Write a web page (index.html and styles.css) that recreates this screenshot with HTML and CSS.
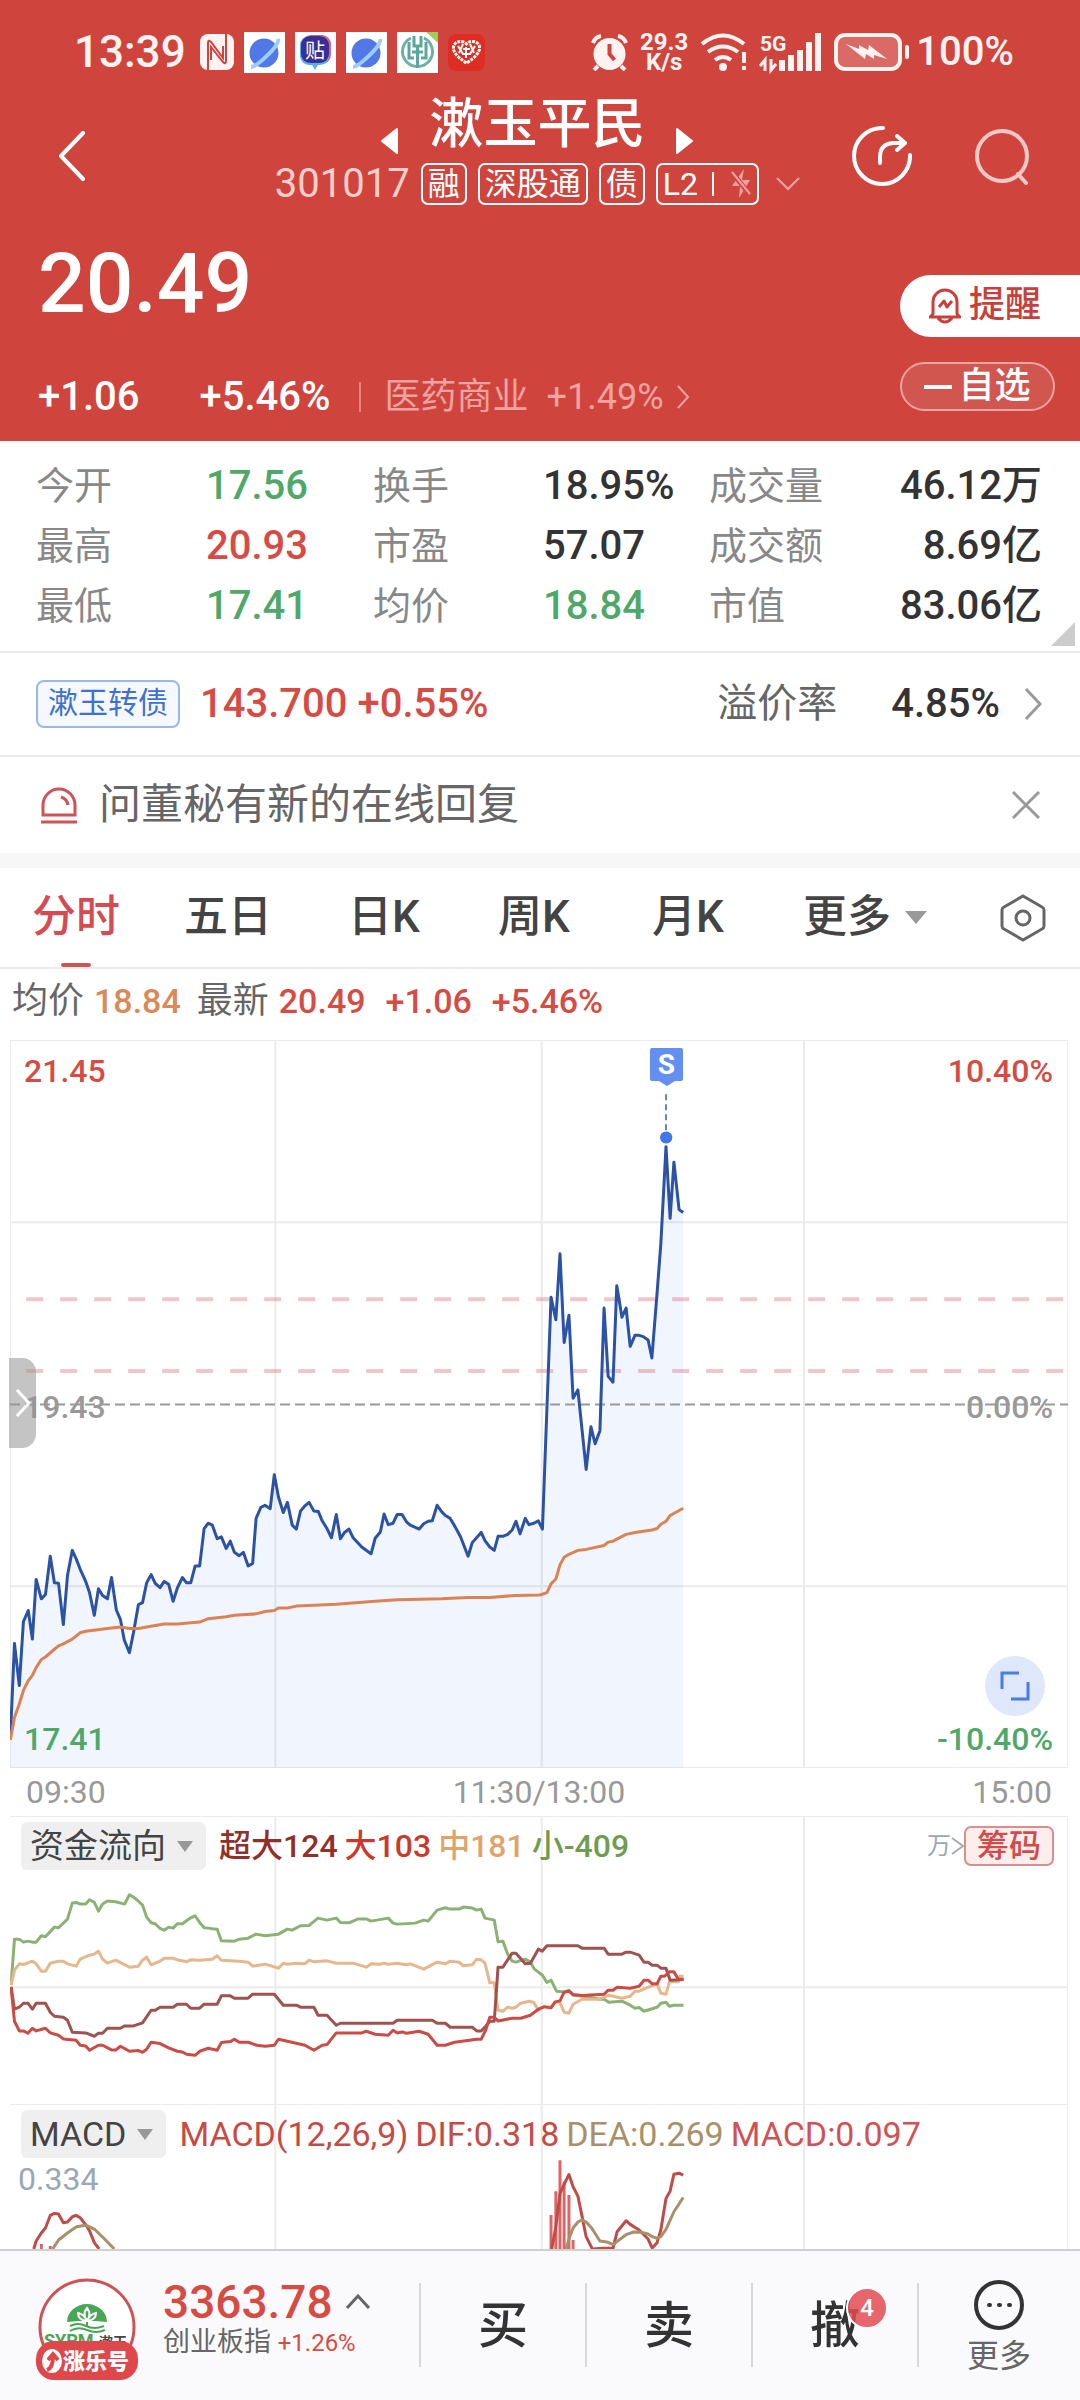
FILE: index.html
```
<!DOCTYPE html>
<html lang="zh-CN">
<head>
  <meta charset="UTF-8">
  <meta name="viewport" content="width=device-width, initial-scale=1.0">
  <title>漱玉平民 301017</title>
  <link rel="stylesheet" href="styles.css">
</head>
<body>
  <div class="page">
    <header class="quote">
      <div class="status">
        <span class="time">13:39</span>
        <svg class="nfc" viewBox="0 0 34 36">
          <rect width="34" height="36" rx="8" fill="#fff3f2"/>
          <path d="M8 36V9q0-4 3-1l12 16V12M26 0v27q0 4-3 1L11 13v13" fill="none" stroke="#cf453e" stroke-width="2"/>
        </svg>
        <svg class="app" viewBox="0 0 41 41">
          <rect width="41" height="41" fill="#fff"/>
          <circle cx="20" cy="21" r="14.500" fill="#5277e6"/>
          <path d="M7 35C12 35 36 14 34 7" fill="none" stroke="#9ccdfb" stroke-width="4"/>
        </svg>
        <svg class="app" viewBox="0 0 41 41">
          <rect width="41" height="41" fill="#fff"/>
          <rect x="7" y="3" width="29" height="29" rx="9" fill="#e0607f"/>
          <path d="M16 31h8l-4 7z" fill="#56aef5"/>
          <rect x="5" y="4" width="29" height="29" rx="9" fill="#56aef5"/>
          <rect x="6" y="4" width="28" height="27" rx="9" fill="#3a2f93"/>
          <text x="20" y="26" class="app-text">贴</text>
        </svg>
        <svg class="app" viewBox="0 0 41 41">
          <rect width="41" height="41" fill="#fff"/>
          <circle cx="20" cy="21" r="14.500" fill="#5277e6"/>
          <path d="M7 35C12 35 36 14 34 7" fill="none" stroke="#9ccdfb" stroke-width="4"/>
        </svg>
        <svg class="app" viewBox="0 0 41 41">
          <rect width="41" height="41" fill="#fff"/>
          <path d="M29 0h12v11z" fill="#9bcf5a"/>
          <path d="M14 6A15 15 0 1 0 27 6" fill="none" stroke="#6db0a6" stroke-width="3"/>
          <path d="M17 4v10h7V4M12 10v16h5M29 10v16h-5M15 20h11M20.500 15v21" fill="none" stroke="#5ea59c" stroke-width="3"/>
        </svg>
        <svg class="app heart" viewBox="0 0 37 37">
          <rect width="37" height="37" rx="8" fill="#df2d23"/>
          <path d="M18.500 29C9 23 5 18 5.500 13s8-8 13-3c5-5 12.500-2 13 3s-3.500 10-13 16z" fill="none" stroke="#fff" stroke-width="3" stroke-dasharray="3 1"/>
          <path d="M10 12l5 8M15 10l-4 9M22 10l4 9M27 12l-5 8M15 15h7M18 13v11M14 20h9" stroke="#fff" stroke-width="2"/>
        </svg>
        <div class="status-right">
          <svg class="alarm" viewBox="0 0 37 37">
            <circle cx="18.500" cy="20" r="16" fill="#fff3f2"/>
            <path d="M2 9q2-6 8-7M35 9q-2-6-8-7M7 32l-4 4M30 32l4 4" stroke="#fff3f2" stroke-width="4" fill="none"/>
            <path d="M18.500 10v10l5 6" stroke="#cf453e" stroke-width="4" fill="none"/>
          </svg>
          <div class="speed"><span>29.3</span><span>K/s</span></div>
          <svg class="wifi" viewBox="0 0 48 38">
            <path d="M2 11Q23-6 44 11M8 19q15-11 30 0M15 27q8-6 16 0" fill="none" stroke="#fff3f2" stroke-width="4"/>
            <circle cx="23" cy="34" r="4" fill="#fff3f2"/>
            <path d="M44 19v11M44 33v4" stroke="#fff3f2" stroke-width="4"/>
          </svg>
          <svg class="signal" viewBox="0 0 62 38">
            <text x="0" y="18" class="net">5G</text>
            <path d="M22 38V27M31 38V22M40 38V17M49 38V9M58 38V0" stroke="#fff3f2" stroke-width="6"/>
            <path d="M0 33l5-6v11M11 26v11l5-6" stroke="#fff3f2" stroke-width="3" fill="none"/>
          </svg>
          <svg class="battery" viewBox="0 0 76 38">
            <rect x="2" y="2" width="64" height="34" rx="9" fill="#da6a66" stroke="#fff3f2" stroke-width="4"/>
            <path d="M12 11l13 5v-4l9 5 1-5 18 14-13-4v4l-8-5-1 5z" fill="#fff3f2"/>
            <path d="M73 14v10" stroke="#fff3f2" stroke-width="4" stroke-linecap="round"/>
          </svg>
          <span class="percent">100%</span>
        </div>
      </div>

      <div class="titlebar">
        <button class="icon-btn back" aria-label="返回">
          <svg width="28" height="50" viewBox="0 0 28 50"><path d="M25 2L3 25l22 23" class="line"/></svg>
        </button>
        <div class="names">
          <div class="name-row">
            <button class="icon-btn" aria-label="上一只"><svg width="18" height="28" viewBox="0 0 18 28"><path d="M17 2v24L2 14z" fill="#fff" stroke="#fff" stroke-width="2" stroke-linejoin="round"/></svg></button>
            <h1>漱玉平民</h1>
            <button class="icon-btn" aria-label="下一只"><svg width="18" height="28" viewBox="0 0 18 28"><path d="M1 2v24l15-12z" fill="#fff" stroke="#fff" stroke-width="2" stroke-linejoin="round"/></svg></button>
          </div>
          <div class="tags">
            <span class="code">301017</span>
            <span class="tag">融</span>
            <span class="tag">深股通</span>
            <span class="tag">债</span>
            <span class="tag level">L2<i></i>
              <svg width="22" height="32" viewBox="0 0 22 32"><path d="M14 1l-2 11h8L9 30l1-12H2z" fill="#f0a09e"/><path d="M1 3l19 24" stroke="#cf453e" stroke-width="5"/><path d="M2 4l18 22" stroke="#f0a09e" stroke-width="2"/></svg>
            </span>
            <svg class="down" width="24" height="14" viewBox="0 0 24 14"><path d="M1 1l11 11L23 1"/></svg>
          </div>
        </div>
        <div class="actions">
          <button class="icon-btn" aria-label="分享">
            <svg width="60" height="60" viewBox="0 0 60 60"><path d="M31 2a28 28 0 1 0 27 27M28 37v-6q0-13 13-14h12M45 10l8 7-8 7" class="line"/></svg>
          </button>
          <button class="icon-btn search" aria-label="搜索">
            <svg width="56" height="60" viewBox="0 0 56 60"><circle cx="28" cy="30" r="25"/><path d="M44 48l8 9"/></svg>
          </button>
        </div>
      </div>

      <div class="price-area">
        <div class="price-left">
          <div class="price">20.49</div>
          <div class="change">
            <span>+1.06</span>
            <span>+5.46%</span>
            <a href="#" class="industry"><b>医药商业</b>+1.49%
              <svg width="14" height="26" viewBox="0 0 14 26"><path d="M2 2l10 11L2 24"/></svg>
            </a>
          </div>
        </div>
        <div class="price-right">
          <button class="remind">
            <svg width="32" height="36" viewBox="0 0 32 36"><path d="M4 26V14a12 12 0 0 1 24 0v12l3 3H1zM9 30q7 8 14 0M10 19l5-6 3 6 5-6"/></svg>提醒
          </button>
          <button class="fav"><i></i>自选</button>
        </div>
      </div>
    </header>

    <dl class="stats">
      <dt>今开</dt><dd class="green">17.56</dd>
      <dt>换手</dt><dd>18.95%</dd>
      <dt>成交量</dt><dd>46.12万</dd>
      <dt>最高</dt><dd class="red">20.93</dd>
      <dt>市盈</dt><dd>57.07</dd>
      <dt>成交额</dt><dd>8.69亿</dd>
      <dt>最低</dt><dd class="green">17.41</dd>
      <dt>均价</dt><dd class="green">18.84</dd>
      <dt>市值</dt><dd>83.06亿</dd>
    </dl>

    <a href="#" class="bond">
      <span class="bond-tag">漱玉转债</span>
      <span class="red">143.700 +0.55%</span>
      <span class="rate">溢价率</span>
      <span class="rate-value">4.85%</span>
      <svg width="18" height="32" viewBox="0 0 18 32"><path d="M2 1l14 15L2 31"/></svg>
    </a>

    <div class="notice">
      <svg width="38" height="38" viewBox="0 0 38 38"><path d="M3 29V19a16 16 0 0 1 32 0v10zM1 36h36M21 11q6 2 7 8"/></svg>
      <span>问董秘有新的在线回复</span>
      <button class="icon-btn close" aria-label="关闭"><svg width="28" height="28" viewBox="0 0 28 28"><path d="M1 1l26 26M27 1L1 27"/></svg></button>
    </div>

    <nav class="tabs">
      <button class="active">分时</button>
      <button>五日</button>
      <button>日K</button>
      <button>周K</button>
      <button>月K</button>
      <button class="more">更多<i class="caret"></i></button>
      <button class="setting" aria-label="设置">
        <svg width="46" height="48" viewBox="0 0 46 48"><path d="M23 2l19 11q2 1 2 3v16q0 2-2 3L23 46 4 35q-2-1-2-3V16q0-2 2-3z"/><circle cx="23" cy="24" r="7"/></svg>
      </button>
    </nav>

    <div class="legend">
      <span>均价</span><b class="orange">18.84</b>
      <span class="last">最新</span><b class="red">20.49</b>
      <b class="red gap">+1.06</b><b class="red gap">+5.46%</b>
    </div>

    <main class="charts">
      <section class="chart">
        <svg class="plot" viewBox="28 20 3074 1502" preserveAspectRatio="none">
          <polygon class="area" points="29,1462 41,1265 55,1352 67,1220 81,1197 93,1256 104,1133 119,1173 131,1164 145,1085 157,1140 169,1141 183,1226 195,1125 209,1073 220,1090 232,1112 248,1137 259,1160 273,1207 285,1152 297,1166 311,1173 323,1129 337,1196 349,1216 360,1258 375,1284 387,1242 401,1185 413,1181 425,1140 438,1123 450,1141 464,1150 476,1137 489,1143 502,1178 514,1151 529,1129 541,1140 553,1140 566,1105 579,1105 592,1028 604,1017 616,1021 630,1049 642,1045 656,1069 668,1054 680,1077 694,1084 706,1077 720,1105 733,1100 743,1007 757,984 769,980 784,987 796,917 808,963 822,995 834,974 848,1021 860,1029 872,992 885,981 897,974 911,992 924,993 935,1012 949,1028 962,1047 976,999 988,1049 1000,1036 1013,1029 1025,1047 1050,1066 1077,1080 1089,1048 1104,1035 1115,998 1127,1020 1141,1017 1153,999 1167,999 1180,1014 1191,1021 1217,1029 1230,1018 1243,1013 1255,1012 1269,980 1282,993 1293,1001 1307,1007 1321,1024 1337,1045 1359,1085 1371,1057 1397,1036 1408,1053 1422,1066 1435,1073 1446,1044 1460,1044 1474,1040 1487,1031 1498,1013 1510,1039 1525,1007 1536,1020 1550,1017 1563,1012 1575,1029 1600,551 1614,597 1626,461 1638,644 1652,588 1664,759 1678,742 1702,906 1716,818 1728,853 1742,826 1754,573 1766,714 1780,726 1791,527 1806,592 1818,573 1830,652 1844,629 1854,629 1868,632 1882,639 1893,676 1908,543 1919,440 1934,240 1946,388 1957,272 1972,370 1984,376 1984,1522 29,1522"/>
          <path class="grid" d="M28 20H3102V1522H28ZM28 396H3102M28 1147H3102M799 20V1522M1573 20V1522M2335 20V1522"/>
          <path class="resist" d="M75 555H3090M75 703H3090"/>
          <path class="zero" d="M28 772H3102"/>
          <polyline class="price-line" points="29,1462 41,1265 55,1352 67,1220 81,1197 93,1256 104,1133 119,1173 131,1164 145,1085 157,1140 169,1141 183,1226 195,1125 209,1073 220,1090 232,1112 248,1137 259,1160 273,1207 285,1152 297,1166 311,1173 323,1129 337,1196 349,1216 360,1258 375,1284 387,1242 401,1185 413,1181 425,1140 438,1123 450,1141 464,1150 476,1137 489,1143 502,1178 514,1151 529,1129 541,1140 553,1140 566,1105 579,1105 592,1028 604,1017 616,1021 630,1049 642,1045 656,1069 668,1054 680,1077 694,1084 706,1077 720,1105 733,1100 743,1007 757,984 769,980 784,987 796,917 808,963 822,995 834,974 848,1021 860,1029 872,992 885,981 897,974 911,992 924,993 935,1012 949,1028 962,1047 976,999 988,1049 1000,1036 1013,1029 1025,1047 1050,1066 1077,1080 1089,1048 1104,1035 1115,998 1127,1020 1141,1017 1153,999 1167,999 1180,1014 1191,1021 1217,1029 1230,1018 1243,1013 1255,1012 1269,980 1282,993 1293,1001 1307,1007 1321,1024 1337,1045 1359,1085 1371,1057 1397,1036 1408,1053 1422,1066 1435,1073 1446,1044 1460,1044 1474,1040 1487,1031 1498,1013 1510,1039 1525,1007 1536,1020 1550,1017 1563,1012 1575,1029 1600,551 1614,597 1626,461 1638,644 1652,588 1664,759 1678,742 1702,906 1716,818 1728,853 1742,826 1754,573 1766,714 1780,726 1791,527 1806,592 1818,573 1830,652 1844,629 1854,629 1868,632 1882,639 1893,676 1908,543 1919,440 1934,240 1946,388 1957,272 1972,370 1984,376"/>
          <polyline class="avg-line" points="29,1464 41,1418 55,1390 67,1362 80,1343 93,1331 104,1315 119,1298 131,1293 157,1277 169,1270 183,1266 209,1256 232,1243 248,1240 311,1234 349,1231 375,1234 401,1234 450,1228 476,1225 514,1225 579,1221 604,1214 656,1210 680,1207 743,1204 769,1199 796,1197 808,1192 834,1192 860,1188 911,1186 976,1184 1089,1178 1153,1175 1282,1173 1359,1170 1422,1170 1497,1166 1568,1165 1588,1160 1600,1142 1614,1132 1626,1103 1638,1087 1652,1081 1678,1073 1702,1071 1754,1063 1766,1056 1780,1054 1818,1040 1844,1036 1893,1031 1908,1028 1919,1019 1934,1013 1946,1001 1984,986"/>
          <path class="sell-stem" d="M1934 132V210"/>
          <path class="sell-dot" d="M1934 221h1"/>
        </svg>
        <span class="sell">S</span>
        <span class="label top left red">21.45</span>
        <span class="label top right red">10.40%</span>
        <span class="label mid left">19.43</span>
        <span class="label mid right">0.00%</span>
        <span class="label bottom left green">17.41</span>
        <span class="label bottom right green">-10.40%</span>
        <button class="drawer" aria-label="展开侧栏"><svg width="16" height="30" viewBox="0 0 16 30"><path d="M2 2l12 13L2 28"/></svg></button>
        <button class="expand" aria-label="全屏"><svg width="30" height="30" viewBox="0 0 30 30"><path d="M2 18V2h17M11 28h17V11"/></svg></button>
      </section>

      <div class="axis"><span>09:30</span><span>11:30/13:00</span><span>15:00</span></div>

      <section class="panel flow">
        <svg class="plot" viewBox="28 168 3074 863" preserveAspectRatio="none">
          <path class="grid" d="M28 168H3102V1031M28 681H3102M799 168V1031M1573 168V1031M2335 168V1031"/>
          <polyline class="f-green" points="31,675 41,537 55,537 67,546 80,543 93,546 104,546 119,527 131,530 157,501 169,503 195,477 209,429 220,427 232,432 248,432 259,419 273,427 285,453 297,432 311,423 335,425 361,432 375,404 387,411 401,423 413,435 425,471 438,488 450,491 464,505 476,510 489,501 502,504 514,491 529,491 553,473 566,467 579,487 592,503 604,504 616,506 630,507 642,542 680,543 694,537 720,534 743,522 769,527 808,522 834,507 848,510 872,497 897,496 923,474 949,480 976,474 988,487 1013,488 1038,477 1065,477 1077,483 1127,474 1141,489 1153,492 1205,489 1230,480 1243,483 1269,450 1293,443 1307,447 1333,447 1345,441 1371,444 1384,450 1397,447 1408,474 1422,477 1435,480 1446,545 1460,543 1474,582 1487,603 1498,606 1525,597 1540,606 1552,627 1575,645 1588,667 1600,660 1616,693 1640,695 1652,690 1664,705 1702,709 1742,717 1754,717 1768,726 1806,723 1830,735 1844,744 1856,742 1870,753 1908,741 1919,729 1934,726 1944,738 1957,735 1985,735"/>
          <polyline class="f-orange" points="31,675 41,630 55,611 67,613 93,603 104,611 119,633 131,633 145,609 169,603 183,603 195,611 220,618 232,597 259,585 273,582 285,573 297,597 311,609 335,600 375,621 401,618 413,600 425,591 438,614 464,603 476,594 502,594 514,599 541,605 553,599 579,600 616,597 630,587 642,600 694,603 720,606 733,618 769,612 808,624 822,609 834,612 860,609 885,611 897,600 911,605 949,602 976,609 1025,609 1063,621 1077,611 1104,612 1115,609 1127,612 1153,609 1180,614 1191,611 1230,627 1269,606 1293,611 1307,603 1333,606 1345,617 1371,614 1384,597 1397,599 1408,609 1422,668 1435,668 1446,750 1460,753 1474,741 1487,744 1498,741 1512,729 1536,723 1550,727 1563,750 1580,738 1600,741 1612,725 1626,727 1638,756 1652,759 1664,732 1690,717 1740,717 1754,711 1768,705 1806,714 1830,708 1844,693 1856,693 1882,681 1908,672 1919,699 1934,702 1944,665 1970,665 1975,648 1985,648"/>
          <polyline class="f-dark" points="31,680 41,747 55,741 67,729 80,729 93,747 104,729 131,729 145,756 157,768 183,771 195,780 209,816 248,818 273,828 285,819 297,819 311,804 349,804 361,797 387,797 413,788 438,750 450,750 464,741 502,741 514,732 541,732 553,744 579,744 592,732 630,732 642,707 668,707 680,714 720,714 733,702 796,702 822,735 860,735 872,741 911,741 923,765 949,765 976,795 988,789 1141,789 1153,780 1255,780 1269,789 1293,789 1307,801 1371,801 1384,812 1397,812 1410,798 1422,783 1435,783 1446,621 1460,621 1487,579 1498,579 1525,611 1540,609 1563,567 1574,573 1588,557 1678,557 1690,564 1754,564 1766,582 1806,582 1818,576 1830,576 1856,585 1870,606 1882,606 1894,615 1908,615 1919,624 1934,624 1946,660 1985,658"/>
          <polyline class="f-red" points="31,680 41,783 55,812 67,812 80,819 93,804 104,812 131,804 145,818 169,825 183,836 220,840 232,855 248,857 259,870 285,855 297,855 323,869 335,869 349,858 375,873 401,871 413,876 425,867 438,846 464,850 489,863 514,873 529,875 541,882 566,885 579,873 604,864 630,870 642,847 668,844 680,837 694,846 720,846 745,855 769,858 796,855 808,837 834,843 885,855 911,870 935,855 949,853 976,818 1050,818 1063,813 1089,822 1127,825 1141,810 1153,818 1167,815 1180,819 1217,813 1243,822 1269,855 1293,855 1320,846 1384,837 1397,837 1410,810 1422,771 1435,771 1446,782 1487,774 1512,774 1540,765 1563,747 1580,740 1600,743 1612,725 1626,722 1638,696 1652,693 1664,703 1690,706 1754,702 1766,690 1780,690 1792,681 1830,684 1856,678 1870,660 1882,660 1894,671 1908,671 1919,648 1930,648 1944,635 1957,635 1970,657 1985,657"/>
        </svg>
        <div class="panel-head">
          <button class="pick">资金流向<i class="caret"></i></button>
          <span class="c-dark">超大124</span>
          <span class="c-red">大103</span>
          <span class="c-orange">中181</span>
          <span class="c-green">小-409</span>
          <span class="unit">万<svg width="13" height="18" viewBox="0 0 13 18"><path d="M1 1l11 8-11 8"/></svg></span>
          <button class="chips">筹码</button>
        </div>
      </section>

      <section class="panel macd">
        <svg class="plot" viewBox="28 1031 3074 436" preserveAspectRatio="none">
          <path class="grid" d="M28 1031H3102V1467M799 1031V1467M1573 1031V1467M2335 1031V1467"/>
          <path class="bars" d="M1600 1467V1365M1614 1467V1293M1626 1467V1200M1638 1467V1265M1652 1467V1305M1664 1467V1440M119 1467V1452M145 1467V1458"/>
          <polyline class="dif" points="97,1467 104,1443 119,1419 131,1404 145,1366 157,1360 169,1362 183,1388 195,1386 209,1370 220,1366 232,1373 248,1394 259,1412 273,1448 287,1467"/>
          <polyline class="dif" points="1602,1467 1614,1400 1626,1300 1640,1268 1652,1243 1664,1280 1678,1308 1690,1368 1702,1430 1720,1467 1750,1465 1780,1465 1792,1415 1818,1382 1830,1393 1856,1410 1882,1437 1894,1464 1908,1448 1919,1410 1934,1315 1946,1293 1957,1242 1972,1239 1984,1245"/>
          <polyline class="dea" points="152,1467 169,1440 195,1419 220,1401 248,1395 273,1407 300,1434 331,1467"/>
          <polyline class="dea" points="1644,1467 1652,1437 1664,1404 1678,1386 1690,1379 1702,1386 1718,1404 1742,1443 1766,1447 1780,1454 1818,1424 1840,1416 1864,1417 1882,1422 1894,1430 1908,1435 1919,1430 1934,1408 1957,1355 1984,1312"/>
        </svg>
        <div class="panel-head">
          <button class="pick">MACD<i class="caret"></i></button>
          <span class="c-dif">MACD(12,26,9)</span>
          <span class="c-dif">DIF:0.318</span>
          <span class="c-dea">DEA:0.269</span>
          <span class="c-macd">MACD:0.097</span>
        </div>
        <div class="max">0.334</div>
      </section>
    </main>

    <footer class="trade">
      <div class="index">
        <a href="#" class="avatar" aria-label="涨乐号">
          <svg width="102" height="104" viewBox="0 0 102 104">
            <circle cx="51" cy="50" r="47" fill="#fff" stroke="#cf5356" stroke-width="3"/>
            <path d="M31 45a20 18 0 0 1 40 0l-12-1h-16z" fill="#4aa556"/>
            <path d="M51 44v6M34 49q8-4 16 0t18 0M34 54q8-5 17-1t18 0" fill="none" stroke="#4aa556" stroke-width="2"/>
            <path d="M51 44q-5-7 0-13q5 6 0 13q-9-1-9-8q6 1 9 8q9-1 9-8q-6 1-9 8" fill="none" stroke="#fff" stroke-width="2"/>
            <text x="8" y="70" class="logo-en">SYPM</text>
            <text x="63" y="70" class="logo-cn">漱玉</text>
            <rect y="64" width="102" height="39" rx="18" fill="#df484b"/>
            <ellipse cx="16" cy="84" rx="10" ry="12" fill="#fff"/>
            <path d="M11 93q6-2 6-14M12 83l5-6 5 6" fill="none" stroke="#df484b" stroke-width="4"/>
            <text x="27" y="92" class="logo-tag">涨乐号</text>
          </svg>
        </a>
        <div>
          <div class="index-value">3363.78<svg width="26" height="16" viewBox="0 0 26 16"><path d="M2 14L13 2l11 12"/></svg></div>
          <div class="index-name">创业板指 <b>+1.26%</b></div>
        </div>
      </div>
      <button>买</button>
      <button>卖</button>
      <button><span class="cancel">撤<em>4</em></span></button>
      <button class="trade-more">
        <svg width="52" height="52" viewBox="0 0 52 52"><circle cx="26" cy="26" r="23"/><path d="M16 26h1M26 26h1M36 26h1"/></svg>
        更多
      </button>
    </footer>
  </div>
</body>
</html>
```
FILE: styles.css
```
* {
  box-sizing: border-box;
}
body {
  margin: 0;
  background: #fff;
  color: #333;
  font-family: Roboto, "Noto Sans CJK SC", sans-serif;
  line-height: 1.2;
}
button {
  border: none;
  padding: 0;
  background: none;
  color: inherit;
  font: inherit;
  cursor: pointer;
}
a {
  color: inherit;
  text-decoration: none;
}
svg {
  display: block;
  flex: none;
}
.page {
  display: flex;
  flex-direction: column;
  min-height: 100vh;
}
.red { color: #d64b43; }
.green { color: #4fa869; }
.orange { color: #d98a58; }

/* header */
.quote {
  background: #cf453e;
  color: #fff;
}
.status {
  display: flex;
  align-items: center;
  gap: 10px;
  height: 102px;
  padding: 2px 66px 0 74px;
  color: #fff3f2;
}
.status .time {
  margin-right: 4px;
  font-size: 44px;
  font-weight: 500;
}
.nfc {
  width: 34px;
  height: 36px;
}
.app {
  width: 41px;
  height: 41px;
}
.app.heart {
  width: 37px;
  height: 37px;
}
.app-text {
  fill: #fff;
  font-size: 20px;
  text-anchor: middle;
}
.status-right {
  display: flex;
  align-items: center;
  gap: 12px;
  margin-left: auto;
}
.alarm {
  width: 37px;
  height: 37px;
}
.speed {
  display: flex;
  flex-direction: column;
  font-size: 24px;
  font-weight: 700;
  line-height: 20px;
  text-align: center;
}
.wifi {
  width: 48px;
  height: 38px;
}
.signal {
  width: 62px;
  height: 38px;
  overflow: visible;
}
.net {
  fill: #fff3f2;
  font-size: 21px;
  font-weight: 700;
}
.battery {
  width: 76px;
  height: 38px;
}
.percent {
  margin-left: -6px;
  font-size: 40px;
  font-weight: 500;
}
.icon-btn {
  display: block;
}
.line {
  fill: none;
  stroke: #fff;
  stroke-width: 4;
  stroke-linecap: round;
  stroke-linejoin: round;
}
.titlebar {
  display: grid;
  grid-template-columns: 215fr auto 228fr;
  align-items: center;
  padding: 4px 50px 0 58px;
  height: 104px;
}
.back {
  justify-self: start;
}
.names {
  margin-top: -12px;
}
.name-row {
  display: flex;
  justify-content: center;
  align-items: flex-end;
  gap: 31px;
}
.name-row h1 {
  margin: 0;
  font-size: 54px;
  font-weight: 500;
  line-height: 60px;
}
.tags {
  display: flex;
  align-items: center;
  gap: 11px;
  margin-top: 8px;
}
.code {
  color: #ffcfcc;
  font-size: 40px;
  line-height: 42px;
}
.tag {
  display: flex;
  align-items: center;
  height: 42px;
  padding: 0 5px;
  border: 2px solid #fff;
  border-radius: 7px;
  font-size: 32px;
}
.level i {
  width: 2px;
  height: 24px;
  margin: 0 16px 0 14px;
  background: #fff;
}
.down {
  margin-left: 6px;
  fill: none;
  stroke: #f0a3a0;
  stroke-width: 2;
}
.actions {
  display: flex;
  justify-content: flex-end;
  align-items: center;
  gap: 62px;
}
.search svg {
  fill: none;
  stroke: #f0c9c7;
  stroke-width: 4;
  stroke-linecap: round;
}
.price-area {
  display: flex;
  justify-content: space-between;
  height: 235px;
  padding-left: 38px;
}
.price {
  margin-top: 26px;
  font-size: 84px;
  font-weight: 500;
  line-height: 104px;
}
.change {
  display: flex;
  align-items: center;
  margin-top: 36px;
  font-size: 40px;
  font-weight: 500;
  line-height: 50px;
}
.change span:first-child {
  margin-right: 60px;
}
.industry {
  display: flex;
  align-items: center;
  gap: 12px;
  margin-left: 28px;
  color: #f0a3a0;
  font-size: 36px;
  font-weight: 400;
}
.industry::before {
  content: '';
  width: 2px;
  height: 30px;
  margin-right: 12px;
  background: #e08783;
}
.industry b {
  margin-right: 6px;
  font-weight: 400;
}
.industry svg {
  fill: none;
  stroke: #f0a3a0;
  stroke-width: 2;
}
.price-right {
  display: flex;
  flex-direction: column;
  gap: 25px;
  width: 180px;
  padding-top: 69px;
}
.remind {
  display: flex;
  align-items: center;
  gap: 8px;
  height: 62px;
  padding-left: 29px;
  border-radius: 31px 0 0 31px;
  background: #fff;
  color: #c9403a;
  font-size: 36px;
  font-weight: 500;
}
.remind svg {
  fill: none;
  stroke: #c9403a;
  stroke-width: 3;
  stroke-linejoin: round;
}
.fav {
  display: flex;
  align-items: center;
  justify-content: center;
  gap: 6px;
  height: 49px;
  margin-right: 25px;
  border: 2px solid #f0a3a0;
  border-radius: 25px;
  background: #d25650;
  font-size: 36px;
  font-weight: 500;
}
.fav i {
  width: 28px;
  height: 4px;
  background: #fff;
}

/* stats */
.stats {
  position: relative;
  display: grid;
  grid-template-columns: 170fr 167fr 170fr 166fr 140fr 193fr;
  margin: 0;
  padding: 15px 38px 15px 36px;
  border-bottom: 2px solid #ebebeb;
  font-size: 40px;
  line-height: 60px;
}
.stats::after {
  content: '';
  position: absolute;
  right: 5px;
  bottom: 5px;
  border: 12px solid #ccc;
  border-top-color: transparent;
  border-left-color: transparent;
}
.stats dt {
  color: #888;
  font-size: 38px;
}
.stats dd {
  margin: 0;
  font-weight: 500;
  white-space: nowrap;
}
.stats dd:nth-of-type(3n) {
  text-align: right;
}

.bond {
  display: flex;
  align-items: center;
  height: 104px;
  padding: 0 38px 0 36px;
  border-bottom: 2px solid #ebebeb;
  font-size: 40px;
}
.bond .red {
  font-weight: 500;
}
.bond-tag {
  height: 48px;
  margin-right: 20px;
  padding: 0 10px;
  border: 2px solid #9ab8e8;
  border-radius: 8px;
  background: #f5f9ff;
  color: #3f72cf;
  font-size: 30px;
  line-height: 42px;
}
.rate {
  margin-left: auto;
  color: #666;
}
.rate-value {
  margin: 0 24px 0 54px;
  font-weight: 500;
}
.bond svg {
  fill: none;
  stroke: #999;
  stroke-width: 3;
}

.notice {
  display: flex;
  align-items: center;
  gap: 21px;
  height: 111px;
  padding: 0 40px;
  border-bottom: 15px solid #f7f7f7;
  color: #666;
  font-size: 42px;
}
.notice svg {
  fill: none;
  stroke: #cf5356;
  stroke-width: 3;
}
.notice .close {
  margin-left: auto;
}
.notice .close svg {
  stroke: #999;
}

/* tabs */
.tabs {
  display: grid;
  grid-template-columns: 152fr 164fr 150fr 154fr 151fr 197fr 46fr;
  align-items: center;
  justify-items: start;
  height: 101px;
  padding: 0 34px 0 32px;
  border-bottom: 2px solid #ebebeb;
  color: #444;
  font-size: 44px;
  font-weight: 500;
}
.tabs button {
  position: relative;
  height: 99px;
}
.tabs .active {
  color: #d64b52;
}
.tabs .active::after {
  content: '';
  position: absolute;
  left: 50%;
  bottom: 0;
  width: 30px;
  height: 4px;
  margin-left: -15px;
  border-radius: 2px;
  background: #cf5356;
}
.tabs .more {
  display: flex;
  align-items: center;
  gap: 14px;
}
.caret {
  border: 8px solid transparent;
  border-top: 11px solid #999;
  border-bottom: none;
}
.more .caret {
  border-width: 13px 11px 0;
}
.setting svg {
  fill: none;
  stroke: #666;
  stroke-width: 3;
}

.legend {
  display: flex;
  align-items: center;
  height: 71px;
  padding: 0 12px 6px;
  color: #666;
  font-size: 36px;
}
.legend b {
  margin-left: 10px;
  font-size: 34px;
  font-weight: 500;
}
.legend .last {
  margin-left: 16px;
}
.legend .gap {
  margin-left: 20px;
}

/* charts */
.charts {
  margin: 0 12px 0 10px;
}
.plot {
  position: absolute;
  top: 0;
  left: 0;
  width: 100%;
  height: 100%;
}
.plot path,
.plot polyline {
  fill: none;
  vector-effect: non-scaling-stroke;
  stroke-linejoin: round;
}
.plot .grid {
  stroke: rgba(130, 130, 130, .16);
  stroke-width: 2;
}
.chart {
  position: relative;
  height: 728px;
}
.area { fill: #f0f5fe; }
.plot .resist {
  stroke: rgba(206, 80, 90, .32);
  stroke-width: 4;
  stroke-dasharray: 17 17;
}
.plot .zero {
  stroke: #999;
  stroke-width: 2;
  stroke-dasharray: 10 5;
}
.plot .price-line {
  stroke: #2b52a5;
  stroke-width: 3;
}
.plot .avg-line {
  stroke: #db8354;
  stroke-width: 3;
}
.plot .sell-stem {
  stroke: #5f8ab8;
  stroke-width: 2;
  stroke-dasharray: 6 4;
}
.plot .sell-dot {
  stroke: #4077e8;
  stroke-width: 12;
  stroke-linecap: round;
}
.sell {
  position: absolute;
  top: 8px;
  left: 62%;
  width: 33px;
  height: 33px;
  margin-left: -16px;
  border-radius: 2px;
  background: #628ff1;
  color: #fff;
  font-size: 28px;
  font-weight: 700;
  line-height: 33px;
  text-align: center;
}
.sell::after {
  content: '';
  position: absolute;
  top: 33px;
  left: 9px;
  border: 8px solid transparent;
  border-top: 5px solid #628ff1;
  border-bottom: none;
}
.label {
  position: absolute;
  font-size: 32px;
  font-weight: 500;
  line-height: 36px;
}
.label.left { left: 14px; }
.label.right { right: 15px; }
.label.top { top: 13px; }
.label.mid {
  top: 349px;
  color: #999;
}
.label.bottom { bottom: 11px; }
.drawer {
  position: absolute;
  top: 318px;
  left: -1px;
  width: 27px;
  height: 90px;
  padding-left: 6px;
  border-radius: 0 14px 14px 0;
  background: rgba(148, 148, 148, .55);
}
.drawer svg {
  fill: none;
  stroke: #fff;
  stroke-width: 3;
}
.expand {
  position: absolute;
  right: 23px;
  bottom: 52px;
  display: flex;
  align-items: center;
  justify-content: center;
  width: 60px;
  height: 60px;
  border-radius: 50%;
  background: #dfe7fb;
}
.expand svg {
  fill: none;
  stroke: #4a7be8;
  stroke-width: 3;
}
.axis {
  display: flex;
  justify-content: space-between;
  padding: 0 16px;
  color: #999;
  font-size: 32px;
  line-height: 48px;
}
.panel {
  position: relative;
}
.flow {
  height: 288px;
}
.macd {
  height: 145px;
}
.panel-head {
  position: relative;
  display: flex;
  align-items: center;
  gap: 7px;
  padding: 6px 14px 0 11px;
  font-size: 32px;
  font-weight: 500;
}
.pick {
  display: flex;
  align-items: center;
  gap: 11px;
  height: 48px;
  margin-right: 6px;
  padding: 0 13px 0 9px;
  border-radius: 6px;
  background: #efefef;
  color: #444;
  font-size: 34px;
  font-weight: 400;
}
.macd .panel-head {
  font-size: 34px;
  font-weight: 400;
}
.c-dark { color: #8f3029; }
.c-red { color: #c93a2d; }
.c-orange { color: #e0a36c; }
.c-green { color: #6f9c50; }
.c-dif { color: #c64b45; }
.c-dea { color: #a8906a; }
.c-macd { color: #d05254; }
.unit {
  display: flex;
  align-items: center;
  margin-left: auto;
  color: #9aa7b5;
  font-size: 24px;
  font-weight: 400;
}
.unit svg {
  fill: none;
  stroke: #aaa;
  stroke-width: 2;
}
.chips {
  height: 40px;
  margin-left: -7px;
  padding: 0 11px;
  border: 2px solid #dc8e8e;
  border-radius: 7px;
  background: #fdeeee;
  color: #d04c4c;
  line-height: 32px;
}
.max {
  position: relative;
  padding-left: 8px;
  color: #9aa7b5;
  font-size: 32px;
  line-height: 42px;
}
.plot .f-green { stroke: #8bb274; stroke-width: 3; }
.plot .f-orange { stroke: #e6b78c; stroke-width: 3; }
.plot .f-dark { stroke: #a0524f; stroke-width: 3; }
.plot .f-red { stroke: #cc4b46; stroke-width: 3; }
.plot .bars { stroke: #dd6565; stroke-width: 3; }
.plot .dif { stroke: #be4c48; stroke-width: 3; }
.plot .dea { stroke: #a8906a; stroke-width: 3; }

/* bottom bar */
.trade {
  display: grid;
  grid-template-columns: 420fr 166fr 166fr 166fr 162fr;
  height: 151px;
  margin-top: auto;
  border-top: 2px solid #d0d0d0;
  background: #fafafc;
}
.trade > button {
  position: relative;
  font-size: 50px;
  font-weight: 500;
}
.trade > button::before {
  content: '';
  position: absolute;
  top: 32px;
  left: -1px;
  width: 2px;
  height: 84px;
  background: #d8d8da;
}
.index {
  display: flex;
  gap: 25px;
  padding: 26px 0 0 36px;
}
.logo-en {
  fill: #4aa556;
  font-size: 18px;
  font-weight: 700;
}
.logo-cn {
  fill: #444;
  font-size: 14px;
  font-weight: 700;
}
.logo-tag {
  fill: #fff;
  font-size: 22px;
  font-weight: 900;
}
.index-value {
  display: flex;
  align-items: center;
  gap: 12px;
  color: #d64b43;
  font-size: 46px;
  font-weight: 500;
  line-height: 50px;
}
.index-value svg {
  fill: none;
  stroke: #666;
  stroke-width: 3;
}
.index-name {
  color: #666;
  font-size: 27px;
  line-height: 30px;
}
.index-name b {
  color: #d64b43;
  font-size: 24px;
  font-weight: 400;
}
.cancel {
  position: relative;
}
.cancel em {
  position: absolute;
  top: -10px;
  right: -28px;
  width: 42px;
  height: 42px;
  border: 2px solid #fff;
  border-radius: 50%;
  background: rgba(224, 76, 82, .85);
  color: #fff;
  font-size: 24px;
  font-style: normal;
  line-height: 38px;
}
.trade .trade-more {
  display: flex;
  flex-direction: column;
  align-items: center;
  padding-top: 28px;
  color: #666;
  font-size: 32px;
  font-weight: 400;
  line-height: 50px;
}
.trade-more svg {
  fill: none;
  stroke: #333;
  stroke-width: 4;
  stroke-linecap: round;
}
```
